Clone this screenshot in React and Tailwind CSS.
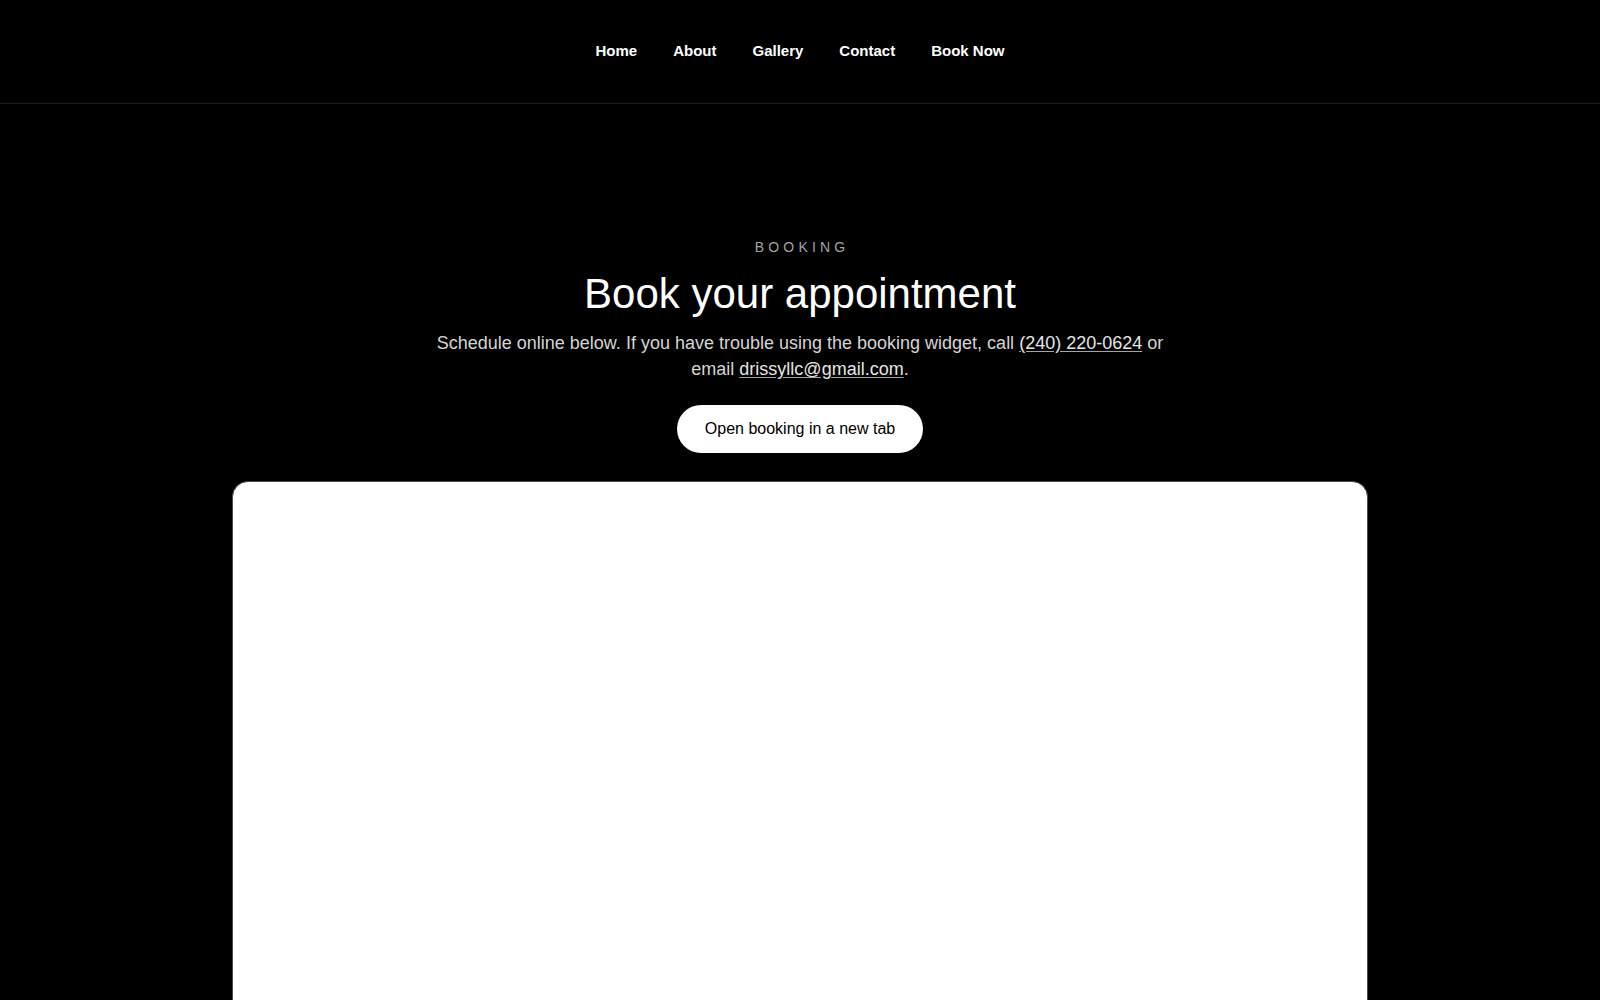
export default function App() {
  const font = { fontFamily: '"Liberation Sans", Arial, sans-serif' };
  return (
    <div className="min-h-screen bg-black text-white" style={font}>
      <header className="h-[104px] border-b border-[#1c1c1c] flex items-center justify-center">
        <nav className="flex items-center gap-9 text-[15px] font-bold text-white">
          <a href="#">Home</a>
          <a href="#">About</a>
          <a href="#">Gallery</a>
          <a href="#">Contact</a>
          <a href="#">Book Now</a>
        </nav>
      </header>
      <main className="flex flex-col items-center pt-[133px]">
        <div className="text-[14px] leading-[20px] tracking-[0.3em] text-[#a3a3a3] pl-[0.3em]">BOOKING</div>
        <h1 className="mt-3 text-[42px] leading-[50px] font-normal text-white">Book your appointment</h1>
        <p className="mt-[11px] max-w-[750px] text-center text-[18px] leading-[26px] text-[#d4d4d4]">
          Schedule online below. If you have trouble using the booking widget, call{" "}
          <a href="#" className="underline underline-offset-2 decoration-[#a3a3a3] text-[#e5e5e5]">(240) 220-0624</a> or email{" "}
          <a href="#" className="underline underline-offset-2 decoration-[#a3a3a3] text-[#e5e5e5]">drissyllc@gmail.com</a>.
        </p>
        <a href="#" className="mt-[23px] h-12 px-7 rounded-full bg-white text-black text-[16px] flex items-center justify-center">
          Open booking in a new tab
        </a>
        <div className="mt-[28px] w-full max-w-[1200px] px-8">
          <div className="h-[700px] w-full rounded-2xl bg-white border border-[#4a4a4a]"></div>
        </div>
      </main>
    </div>
  );
}
